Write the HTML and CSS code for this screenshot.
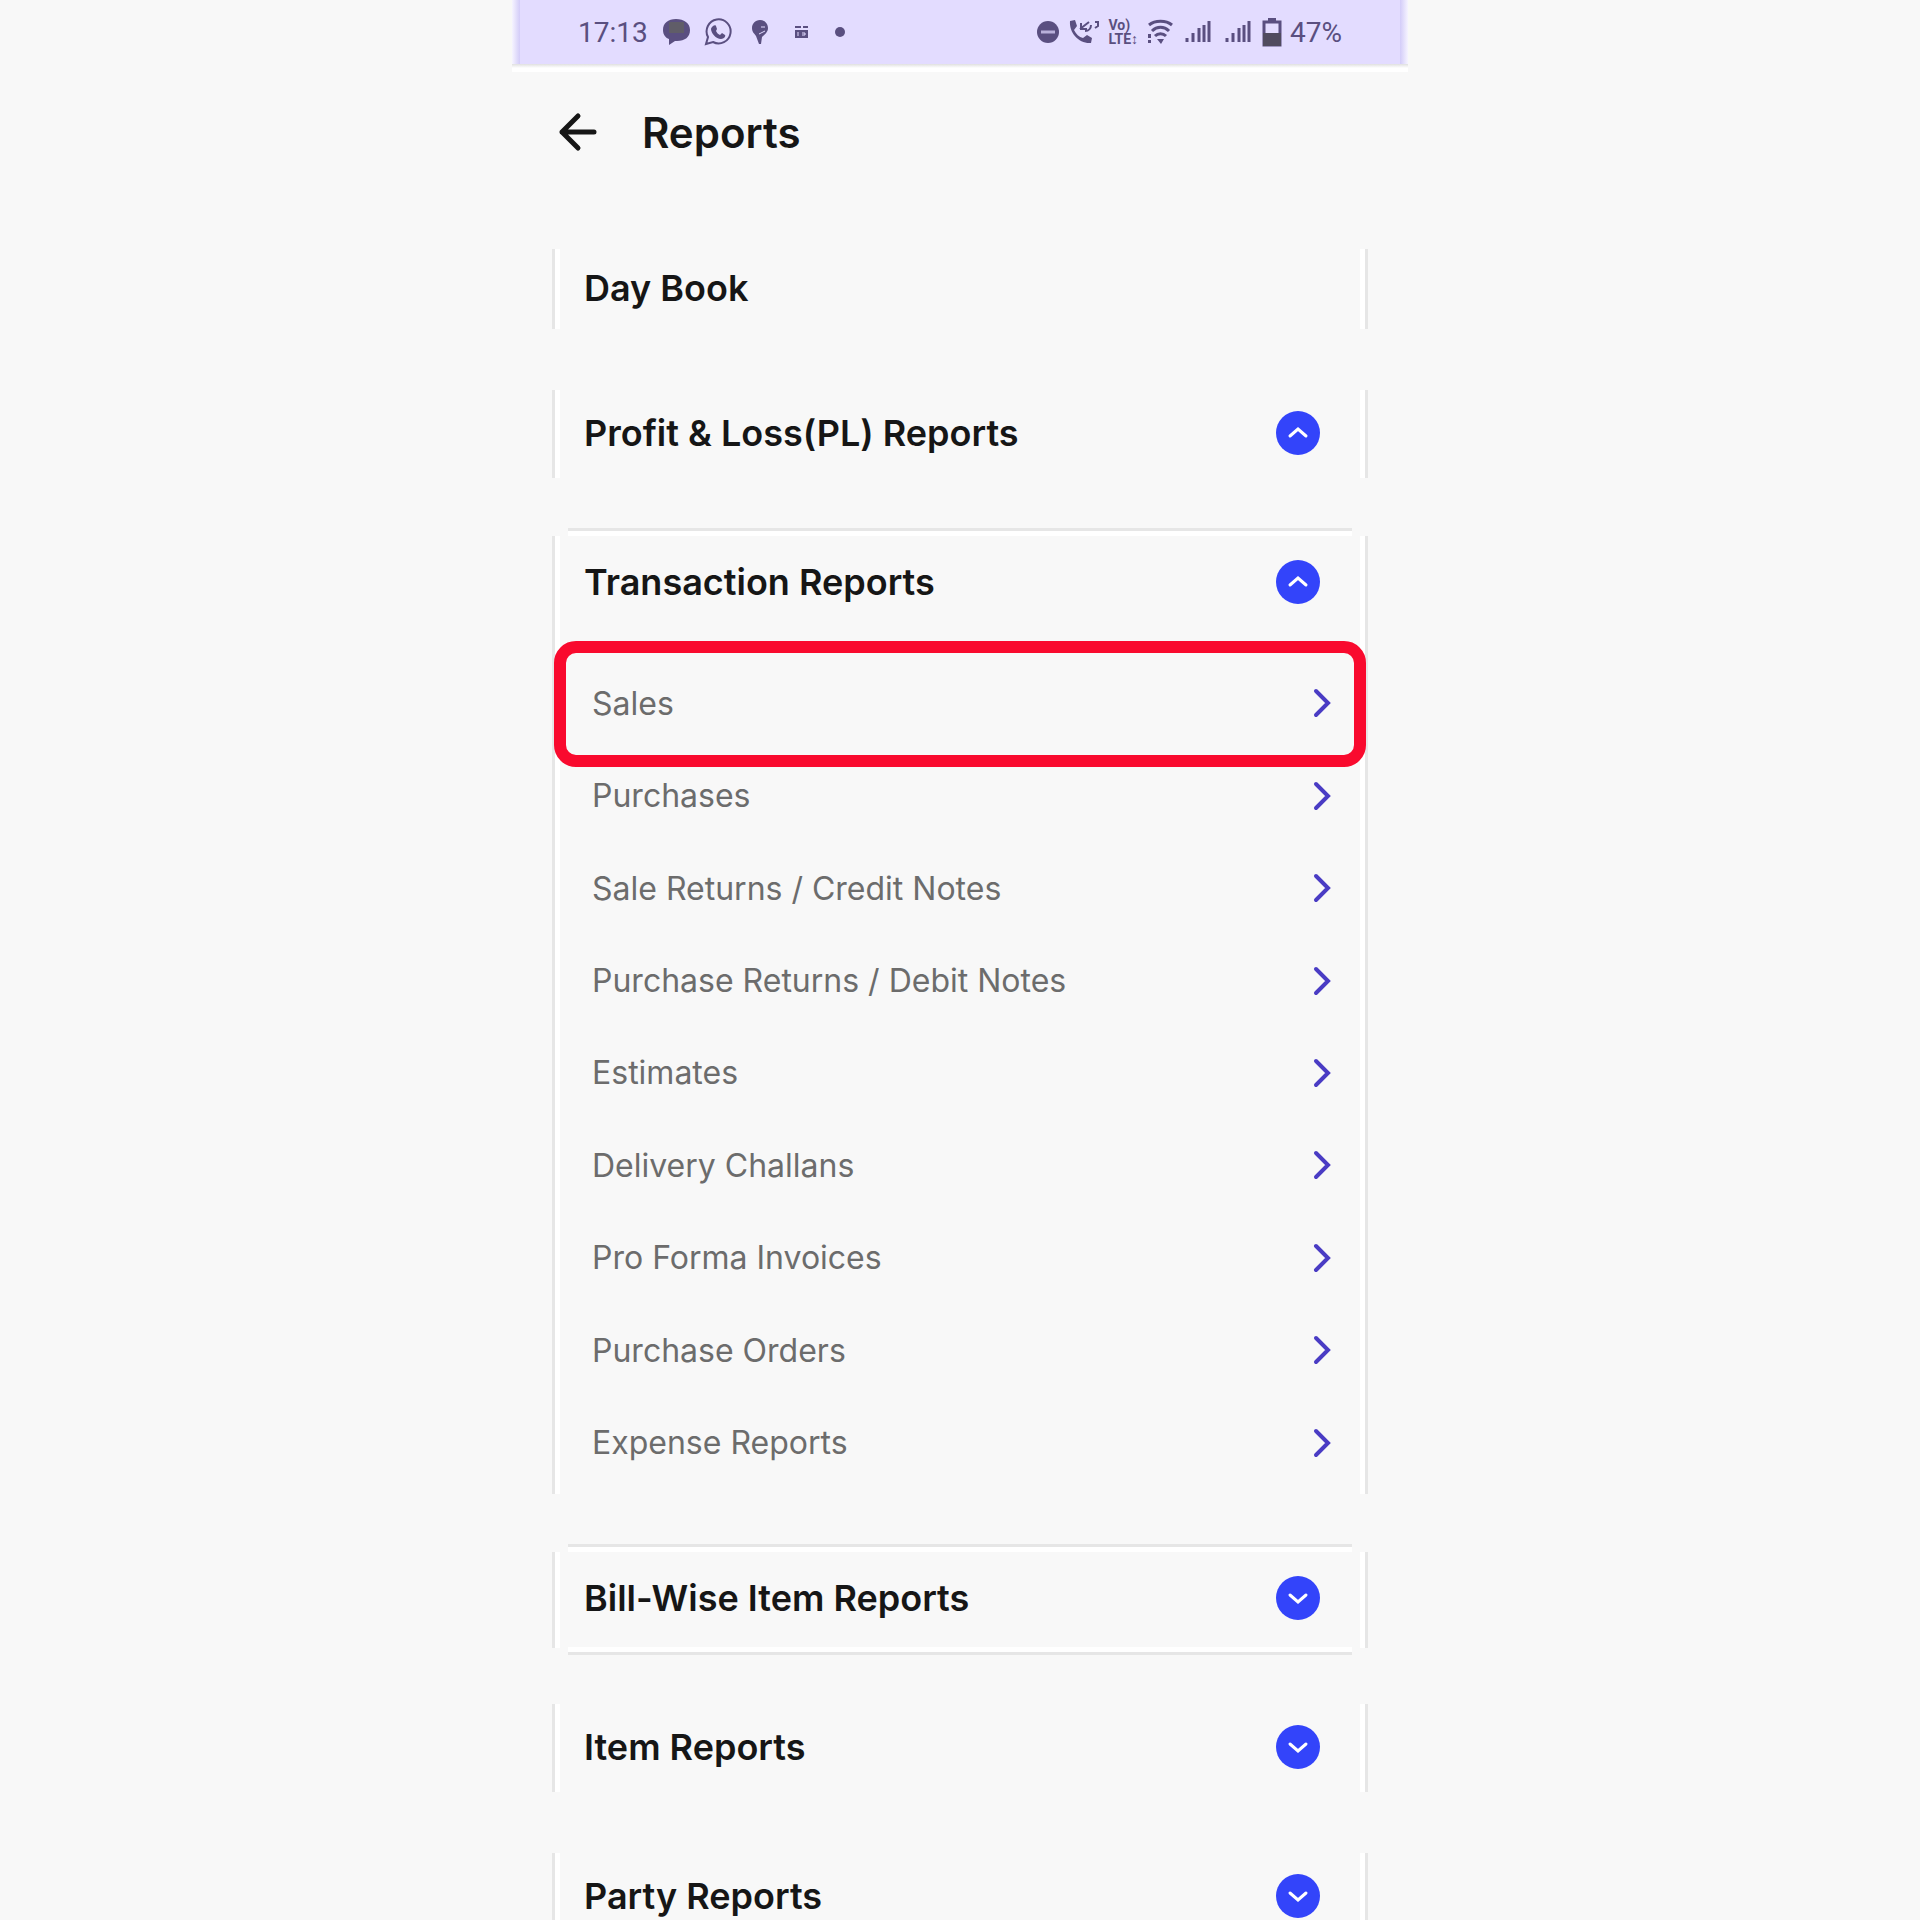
FILE: index.html
```html
<!DOCTYPE html>
<html lang="en">
  <head>
    <meta charset="UTF-8" />
    <meta name="viewport" content="width=device-width, initial-scale=1.0" />
    <title>Reports</title>
    <link rel="stylesheet" href="styles.css">
  </head>
  <body>
    <!-- shared icons -->
    <svg class="sprite" aria-hidden="true">
      <symbol id="right" viewBox="0 0 20 30">
        <path d="M4 3l12 12L4 27" fill="none" stroke="currentColor" stroke-width="4" stroke-linecap="round" />
      </symbol>
      <symbol id="up" viewBox="0 0 44 44">
        <circle cx="22" cy="22" r="22" fill="#3344fa" />
        <path d="M14 25l8-7 8 7" fill="none" stroke="#fff" stroke-width="3" stroke-linecap="round" />
      </symbol>
      <symbol id="down" viewBox="0 0 44 44">
        <circle cx="22" cy="22" r="22" fill="#3344fa" />
        <path d="M14 19l8 7 8-7" fill="none" stroke="#fff" stroke-width="3" stroke-linecap="round" />
      </symbol>
      <symbol id="signal" viewBox="0 0 28 28">
        <path d="M3 20v4M9 15v9M15 10v14M25 3v21" fill="none" stroke="currentColor" stroke-width="3" />
        <path d="M20 7v17" fill="none" stroke="currentColor" stroke-width="3" />
      </symbol>
    </svg>

    <div class="phone">
      <div class="status-bar">
        <div class="status-left">
          <span class="time">17:13</span>
          <svg width="28" height="28" viewBox="0 0 28 28">
            <path d="M14 1C6 1 1 5 1 12c0 5 3 8 6 9v6l6-4h2c8 0 13-4 13-11S22 1 14 1z" fill="#5a4f80" />
            <path d="M7 4h15v11H7z" fill="#605d68" />
          </svg>
          <svg width="28" height="28" viewBox="0 0 28 28">
            <path d="M2 26l2-7a12 12 0 1 1 5 5z" fill="none" stroke="currentColor" stroke-width="2" />
            <path d="M9 8c1-1 3-1 3 0l1 3-1 2c1 2 2 3 4 4l2-2 3 2c1 1-1 4-4 4-5 0-10-6-10-10 0-1 1-2 2-3z" fill="currentColor" />
          </svg>
          <svg width="20" height="28" viewBox="0 0 20 28">
            <path d="M10 2C5 2 2 6 2 10s2 5 4 8l3 8h2l1-7c3-3 6-5 6-9s-3-8-8-8z" fill="currentColor" />
            <path d="M11 9h4M9 16l6-3" stroke="#e3dcff" stroke-width="1" />
          </svg>
          <svg width="16" height="16" viewBox="0 0 16 16">
            <path d="M1 2h6v2H1zM9 2h5v2H9zM1 6h13v8H1z" fill="currentColor" />
            <path d="M4 8v4M8 9h3v2H8" fill="none" stroke="#e3dcff" stroke-width="1" />
          </svg>
          <svg width="12" height="12" viewBox="0 0 12 12">
            <circle cx="6" cy="6" r="5" fill="currentColor" />
          </svg>
        </div>
        <div class="status-right">
          <svg width="24" height="24" viewBox="0 0 24 24">
            <circle cx="12" cy="12" r="11" fill="currentColor" />
            <path d="M5 12h14" stroke="#b9b0da" stroke-width="3" />
          </svg>
          <svg width="32" height="28" viewBox="0 0 32 28">
            <path d="M2 3l5-1 2 6-3 4c2 4 5 7 9 8l4-3 5 3-1 5C11 26 1 15 2 3z" fill="currentColor" />
            <path d="M12 11l9-7M13 5v6h6M17 13c4 0 6-3 6-6M27 4h3v4l-3 2" fill="none" stroke="currentColor" stroke-width="2" />
          </svg>
          <span class="volte"><span>Vo)</span><span>LTE↕</span></span>
          <svg width="28" height="28" viewBox="0 0 28 28">
            <path d="M3 7c6-5 17-5 23 0M6 13c5-5 12-5 17 0M9 18c3-3 8-3 11 0" fill="none" stroke="currentColor" stroke-width="3" />
            <path d="M11 21h7l-3 5zM2 16h3v4H2zM2 22h3v3H2z" fill="currentColor" />
          </svg>
          <svg class="signal"><use href="#signal" /></svg>
          <svg class="signal"><use href="#signal" /></svg>
          <svg width="20" height="30" viewBox="0 0 20 30">
            <path d="M2 5h16v23H2z" fill="none" stroke="currentColor" stroke-width="3" />
            <path d="M6 1h8v4H6z" fill="currentColor" />
            <path d="M1 16h18v13H1z" fill="#504b5e" />
          </svg>
          <span class="battery">47%</span>
        </div>
      </div>

      <header class="header">
        <button class="back" aria-label="Back">
          <svg width="40" height="40" viewBox="0 0 40 40">
            <path d="M36 20H4M20 4L4 20l16 16" fill="none" stroke="currentColor" stroke-width="5" stroke-linecap="round" stroke-linejoin="round" />
          </svg>
        </button>
        <h1>Reports</h1>
      </header>

      <main class="reports">
        <section class="card card-small">
          <a class="card-title" href="#">Day Book</a>
        </section>

        <section class="card">
          <button class="card-title">Profit &amp; Loss(PL) Reports <svg class="toggle"><use href="#up" /></svg></button>
        </section>

        <section class="card line-top">
          <button class="card-title">Transaction Reports <svg class="toggle"><use href="#up" /></svg></button>
          <ul class="list">
            <li class="selected"><a href="#">Sales <svg class="arrow"><use href="#right" /></svg></a></li>
            <li><a href="#">Purchases <svg class="arrow"><use href="#right" /></svg></a></li>
            <li><a href="#">Sale Returns / Credit Notes <svg class="arrow"><use href="#right" /></svg></a></li>
            <li><a href="#">Purchase Returns / Debit Notes <svg class="arrow"><use href="#right" /></svg></a></li>
            <li><a href="#">Estimates <svg class="arrow"><use href="#right" /></svg></a></li>
            <li><a href="#">Delivery Challans <svg class="arrow"><use href="#right" /></svg></a></li>
            <li><a href="#">Pro Forma Invoices <svg class="arrow"><use href="#right" /></svg></a></li>
            <li><a href="#">Purchase Orders <svg class="arrow"><use href="#right" /></svg></a></li>
            <li><a href="#">Expense Reports <svg class="arrow"><use href="#right" /></svg></a></li>
          </ul>
        </section>

        <section class="card line-top line-bottom">
          <button class="card-title">Bill-Wise Item Reports <svg class="toggle"><use href="#down" /></svg></button>
        </section>

        <section class="card">
          <button class="card-title">Item Reports <svg class="toggle"><use href="#down" /></svg></button>
        </section>

        <section class="card">
          <button class="card-title">Party Reports <svg class="toggle"><use href="#down" /></svg></button>
        </section>
      </main>
    </div>
  </body>
</html>
```

FILE: styles.css
```css
* {
  padding: 0;
  margin: 0;
  box-sizing: border-box;
}
:root {
  --bg: #f8f8f8;
  --status: #e3dcff;
  --status-ink: #5a4f80;
  --line: #e6e6e6;
  --red: #f90a2e;
}
body {
  background-color: var(--bg);
  font-family: Inter, "Liberation Sans", sans-serif;
  color: #161616;
}
button {
  border: none;
  background: none;
  font: inherit;
  color: inherit;
  cursor: pointer;
}
a {
  color: inherit;
  text-decoration: none;
}
.sprite {
  display: none;
}
.phone {
  max-width: 896px;
  height: 100vh;
  margin: 0 auto;
  overflow: hidden;
}

/* status bar */
.status-bar {
  display: flex;
  justify-content: space-between;
  align-items: center;
  height: 72px;
  padding: 0 66px 8px;
  background: linear-gradient(#e0e0e0, white 4px) bottom / 100% 8px no-repeat,
    linear-gradient(90deg, #f6f4ff, #d3ccf8 8px, var(--status) 8px, var(--status) calc(100% - 8px), #d3ccf8 calc(100% - 8px), #f6f4ff);
  color: var(--status-ink);
  font-family: Roboto, sans-serif;
  font-size: 28px;
}
.status-left,
.status-right {
  display: flex;
  align-items: center;
}
.status-left {
  gap: 14px;
}
.status-left svg:nth-of-type(n + 3) {
  margin-left: 4px;
}
.status-left svg:nth-of-type(n + 4) {
  margin-left: 10px;
}
.status-right {
  gap: 8px;
}
.volte {
  display: grid;
  font-size: 14px;
  line-height: 14px;
  font-weight: 700;
}
.signal {
  width: 28px;
  height: 28px;
  margin: 0 2px;
}

/* page header */
.header {
  display: flex;
  align-items: center;
  gap: 44px;
  height: 120px;
  padding-left: 46px;
}
.header h1 {
  font-size: 42px;
  font-weight: 600;
}
.back {
  display: flex;
}

/* report groups */
.reports {
  display: flex;
  flex-direction: column;
  gap: 35px;
  padding: 43px 40px 0;
}
.card {
  --top: 14px;
  --bottom: 12px;
  position: relative;
}
.card::before {
  content: "";
  position: absolute;
  inset: var(--top) 0 var(--bottom);
  border: solid var(--line);
  border-width: 0 3px;
  box-shadow: inset 5px 0 white, inset -5px 0 white;
  pointer-events: none;
}
.line-top {
  --top: 11px;
  background: linear-gradient(var(--line) 3px, white 3px) center 3px / calc(100% - 32px) 8px no-repeat;
}
.line-bottom {
  --bottom: 7px;
  background: linear-gradient(var(--line) 3px, white 3px) center 3px / calc(100% - 32px) 8px no-repeat,
    linear-gradient(white 5px, var(--line) 5px) bottom / calc(100% - 32px) 8px no-repeat;
}
.card-title {
  display: flex;
  justify-content: space-between;
  align-items: center;
  width: 100%;
  height: 114px;
  padding: 0 48px 0 32px;
  font-size: 36px;
  font-weight: 600;
}
.card-small .card-title {
  height: 106px;
}
.toggle {
  width: 44px;
  height: 44px;
}
.list {
  display: grid;
  grid-auto-rows: 1fr;
  min-height: 832px;
  margin: 18px 0 17px;
  list-style: none;
}
.list li {
  position: relative;
}
.list a {
  display: flex;
  justify-content: space-between;
  align-items: center;
  height: 100%;
  padding: 0 36px 0 40px;
  color: #6c6c6c;
  font-size: 32px;
}
.arrow {
  width: 20px;
  height: 30px;
  color: #4a3cc4;
}
.selected::after {
  content: "";
  position: absolute;
  inset: -16px 2px -18px;
  border: 12px solid var(--red);
  border-radius: 22px;
  pointer-events: none;
}
```
